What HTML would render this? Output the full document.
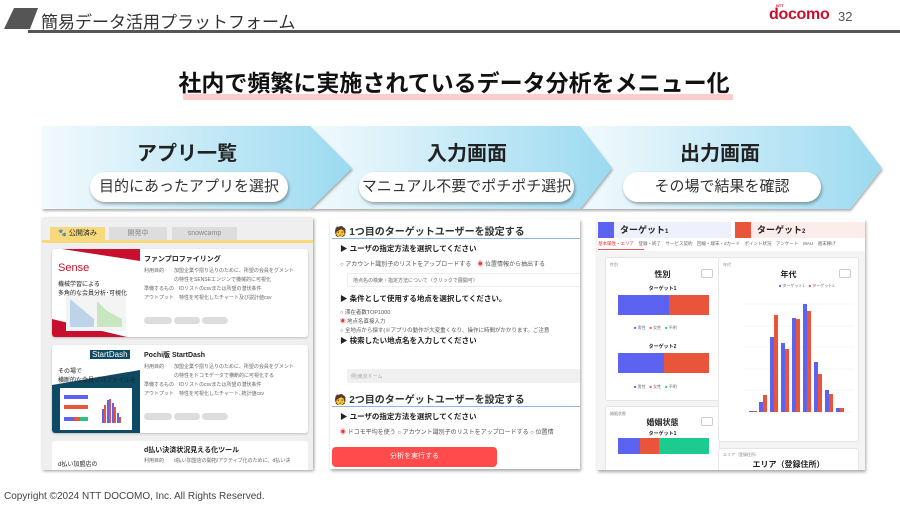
<!DOCTYPE html>
<html><head><meta charset="utf-8"><style>
*{box-sizing:border-box;margin:0;padding:0}
body{width:900px;height:505px;background:#fff;font-family:"Liberation Sans","Noto Sans CJK JP",sans-serif;position:relative;overflow:hidden;color:#222}
.a{position:absolute}
.t{white-space:nowrap}
.pill{position:absolute;height:30px;background:#fff;border-radius:15px;box-shadow:1px 2px 3px rgba(0,0,0,.35);font-size:15px;text-align:center;line-height:30px;color:#333}
.h{position:absolute;font-size:20px;font-weight:bold;color:#222;text-align:center}
.sm{font-size:5px;color:#666}
</style></head><body>
<!-- header -->
<svg class="a" style="left:0;top:0" width="900" height="36">
<polygon points="14,8 38,8 30,29 4,29" fill="#555"/>
<rect x="28" y="30" width="872" height="3" fill="#555"/>
</svg>
<div class="a t" style="left:41px;top:8px;font-size:17px;color:#333">簡易データ活用プラットフォーム</div>
<div class="a t" style="left:769px;top:6px;font-size:16px;font-weight:bold;color:#c8102e;letter-spacing:-0.3px">docomo</div>
<div class="a t" style="left:776px;top:3px;font-size:4px;color:#c8102e;font-weight:bold">NTT</div>
<div class="a t" style="left:838px;top:9px;font-size:13px;color:#555">32</div>

<!-- title -->
<div class="a" style="left:183px;top:94px;width:550px;height:6px;background:#fcc"></div>
<div class="a t" style="left:0;width:908px;text-align:center;top:64px;font-size:23px;font-weight:bold;color:#111">社内で頻繁に実施されているデータ分析をメニュー化</div>

<!-- chevrons -->
<svg class="a" style="left:0;top:0" width="900" height="215">
<defs><linearGradient id="g" x1="0" x2="1"><stop offset="0" stop-color="#f2fafd"/><stop offset="1" stop-color="#9bdaf0"/></linearGradient>
<filter id="s"><feDropShadow dx="1" dy="2" stdDeviation="1" flood-opacity=".3"/></filter></defs>
<polygon filter="url(#s)" points="580,126 850,126 882,168 850,209 580,209 612,168" fill="url(#g)"/>
<polygon filter="url(#s)" points="310,126 580,126 612,168 580,209 310,209 342,168" fill="url(#g)"/>
<polygon filter="url(#s)" points="42,126 310,126 352,168 310,209 42,209" fill="url(#g)"/>
</svg>
<div class="h t" style="left:87px;width:200px;top:137px">アプリ一覧</div>
<div class="h t" style="left:362px;width:210px;top:137px">入力画面</div>
<div class="h t" style="left:620px;width:200px;top:137px">出力画面</div>
<div class="pill t" style="left:90px;top:172px;width:198px">目的にあったアプリを選択</div>
<div class="pill t" style="left:359px;top:172px;width:215px">マニュアル不要でポチポチ選択</div>
<div class="pill t" style="left:623px;top:172px;width:198px">その場で結果を確認</div>

<!-- left panel -->
<div class="a" style="left:42px;top:218px;width:271px;height:252px;background:#efefef;box-shadow:1px 1px 3px rgba(0,0,0,.4);overflow:hidden">
 <div class="a" style="left:0;top:22px;width:271px;height:3px;background:#f7d87a"></div>
 <div class="a t" style="left:8px;top:9px;width:55px;height:14px;background:#f7d87a;font-size:7px;line-height:14px;text-align:center">🐾 公開済み</div>
 <div class="a t" style="left:67px;top:9px;width:58px;height:13px;background:#ddd;font-size:7px;line-height:13px;text-align:center;color:#888">開発中</div>
 <div class="a t" style="left:130px;top:9px;width:65px;height:13px;background:#ddd;font-size:7px;line-height:13px;text-align:center;color:#888">snowcamp</div>
 <div class="a" style="left:10px;top:31px;width:256px;height:88px;background:#fff;border-radius:3px;box-shadow:0 1px 2px rgba(0,0,0,.2);overflow:hidden">
  <svg class="a" style="left:0;top:0" width="88" height="88"><polygon points="10,0 88,0 88,12" fill="#c8102e"/><polygon points="0,70 0,88 75,88" fill="#c8102e"/><rect x="14" y="46" width="60" height="36" fill="#f4f4f4"/><polygon points="18,50 18,78 42,78 42,70 30,60" fill="#bcd3ea"/><polygon points="45,52 45,78 70,78 70,70 55,62" fill="#c8e6c0"/></svg>
  <div class="a t" style="left:6px;top:13px;font-size:11px;color:#c8102e">Sense</div>
  <div class="a t" style="left:6px;top:30px;font-size:6px">機械学習による<br>多角的な会員分析･可視化</div>
  <div class="a t" style="left:92px;top:5px;font-size:7px;font-weight:bold">ファンプロファイリング</div>
  <div class="a t sm" style="left:92px;top:18px;line-height:9px">利用目的　　加盟企業や摺り込りのために、所望の会員をグメント<br>　　　　　　の特性をSENSEエンジンで機械的に可視化<br>準備するもの　IDリストのcsvまたは所望の潜伏条件<br>アウトプット　特性を可視化したチャート及び説計値csv</div>
  <div class="a" style="left:92px;top:68px;width:28px;height:7px;background:#ddd;border-radius:4px"></div>
  <div class="a" style="left:122px;top:68px;width:26px;height:7px;background:#ddd;border-radius:4px"></div>
  <div class="a" style="left:150px;top:68px;width:26px;height:7px;background:#ddd;border-radius:4px"></div>
 </div>
 <div class="a" style="left:10px;top:127px;width:256px;height:88px;background:#fff;border-radius:3px;box-shadow:0 1px 2px rgba(0,0,0,.2);overflow:hidden">
  <svg class="a" style="left:0;top:0" width="88" height="88"><polygon points="0,40 88,25 88,88 0,88" fill="#0f4a64"/><rect x="8" y="43" width="72" height="42" fill="#fff"/><rect x="12" y="50" width="24" height="4" fill="#5b63f0"/><rect x="12" y="60" width="24" height="4" fill="#e8553a"/><rect x="12" y="72" width="10" height="4" fill="#5b63f0"/><rect x="22" y="72" width="6" height="4" fill="#e8553a"/><rect x="28" y="72" width="8" height="4" fill="#2ac48a"/><g fill="#5b63f0"><rect x="50" y="64" width="2" height="14"/><rect x="55" y="55" width="2" height="23"/><rect x="60" y="58" width="2" height="20"/><rect x="65" y="68" width="2" height="10"/></g><g fill="#e8553a"><rect x="52" y="60" width="2" height="18"/><rect x="57" y="54" width="2" height="24"/><rect x="62" y="62" width="2" height="16"/><rect x="67" y="72" width="2" height="6"/></g></svg>
  <div class="a t" style="left:38px;top:5px;font-size:8px;background:#0f4a64;color:#fff;padding:0 2px">StartDash</div>
  <div class="a t" style="left:6px;top:23px;font-size:6px;line-height:9px">その場で<br>横断的な会員プロファイルを</div>
  <div class="a t" style="left:92px;top:5px;font-size:7px;font-weight:bold">Pochi版 StartDash</div>
  <div class="a t sm" style="left:92px;top:18px;line-height:9px">利用目的　　加盟企業や摺り込りのために、所望の会員をグメント<br>　　　　　　の特性をドコモデータで横断的に可視化する<br>準備するもの　IDリストのcsvまたは所望の潜伏条件<br>アウトプット　特性を可視化したチャート､統計値csv</div>
  <div class="a" style="left:92px;top:68px;width:28px;height:7px;background:#ddd;border-radius:4px"></div>
  <div class="a" style="left:122px;top:68px;width:26px;height:7px;background:#ddd;border-radius:4px"></div>
  <div class="a" style="left:150px;top:68px;width:26px;height:7px;background:#ddd;border-radius:4px"></div>
 </div>
 <div class="a" style="left:10px;top:223px;width:256px;height:40px;background:#fff;border-radius:3px">
  <div class="a t" style="left:6px;top:18px;font-size:6px">d払い加盟店の</div>
  <div class="a t" style="left:92px;top:4px;font-size:7px;font-weight:bold">d払い決済状況見える化ツール</div>
  <div class="a t sm" style="left:92px;top:16px">利用目的　　d払い加盟店の開拓/アクティブ化のために、d払い決</div>
 </div>
</div>

<!-- middle panel -->
<div class="a" style="left:330px;top:219px;width:250px;height:250px;background:#fff;box-shadow:1px 2px 3px rgba(0,0,0,.35);overflow:hidden">
 <div class="a t" style="left:4px;top:4px;font-size:10px;font-weight:bold;color:#333">🧑 1つ目のターゲットユーザーを設定する</div>
 <div class="a" style="left:2px;top:19px;width:248px;height:1px;background:#8ab6e8"></div>
 <div class="a t" style="left:10px;top:24px;font-size:7.5px;font-weight:bold">▶ ユーザの指定方法を選択してください</div>
 <div class="a t" style="left:10px;top:40px;font-size:6px;color:#555">○ アカウント識別子のリストをアップロードする　<span style="color:#e33">◉</span> 位置情報から抽出する</div>
 <div class="a" style="left:17px;top:54px;width:240px;height:14px;border:1px solid #eee;border-radius:2px"></div>
 <div class="a t" style="left:23px;top:58px;font-size:5px;color:#666">地点名の検索・指定方法について（クリックで展開可）</div>
 <div class="a t" style="left:10px;top:74px;font-size:7.5px;font-weight:bold">▶ 条件として使用する地点を選択してください。</div>
 <div class="a t" style="left:10px;top:90px;font-size:5.5px;color:#555;line-height:9px">○ 滞在者数TOP1000<br><span style="color:#e33">◉</span> 地点名直接入力<br>○ 全地点から探す(※アプリの動作が大変重くなり、操作に時間がかかります。ご注意</div>
 <div class="a t" style="left:10px;top:116px;font-size:7.5px;font-weight:bold">▶ 検索したい地点名を入力してください</div>
 <div class="a" style="left:17px;top:150px;width:240px;height:14px;background:#f0f0f0"></div>
 <div class="a t" style="left:21px;top:154px;font-size:5px;color:#aaa">例)東京ドーム</div>
 <div class="a t" style="left:4px;top:172px;font-size:10px;font-weight:bold;color:#333">🧑 2つ目のターゲットユーザーを設定する</div>
 <div class="a" style="left:2px;top:187px;width:248px;height:1px;background:#8ab6e8"></div>
 <div class="a t" style="left:10px;top:192px;font-size:7.5px;font-weight:bold">▶ ユーザの指定方法を選択してください</div>
 <div class="a t" style="left:10px;top:208px;font-size:6px;color:#555"><span style="color:#e33">◉</span> ドコモ平均を使う ○ アカウント識別子のリストをアップロードする ○ 位置情</div>
 <div class="a t" style="left:2px;top:228px;width:165px;height:20px;background:#ff4b4b;border-radius:4px;color:#fff;font-size:7px;line-height:20px;text-align:center">分析を実行する</div>
</div>

<!-- right panel -->
<div class="a" style="left:597px;top:219px;width:268px;height:251px;background:#f4f4f4;box-shadow:1px 2px 3px rgba(0,0,0,.35);overflow:hidden">
 <div class="a" style="left:0;top:0;width:268px;height:32px;background:#fff"></div>
 <div class="a" style="left:1px;top:3px;width:16px;height:16px;background:#5b63f0"></div>
 <div class="a t" style="left:17px;top:3px;width:117px;height:16px;background:#eef0fb;font-size:9px;font-weight:bold;line-height:16px;padding-left:6px">ターゲット<span style="font-size:6px">1</span></div>
 <div class="a" style="left:138px;top:3px;width:16px;height:16px;background:#e8553a"></div>
 <div class="a t" style="left:154px;top:3px;width:114px;height:16px;background:#fcecea;font-size:9px;font-weight:bold;line-height:16px;padding-left:6px">ターゲット<span style="font-size:6px">2</span></div>
 <div class="a t" style="left:1px;top:22px;font-size:4.5px;color:#666"><span style="color:#e33">基本属性・エリア</span>　登録・終了　サービス契約　回線・端末・dカード　ポイント状況　アンケート　WAU　週末稼げ</div>
 <div class="a" style="left:1px;top:30px;width:46px;height:1px;background:#e55"></div>
 <div class="a" style="left:8px;top:38px;width:115px;height:144px;background:#fff;border:1px solid #e6e6e6;border-radius:3px">
  <div class="a t" style="left:4px;top:4px;font-size:4px;color:#888">性別</div>
  <div class="a t" style="left:0;width:113px;top:11px;text-align:center;font-size:8px;font-weight:bold">性別</div>
  <div class="a" style="left:95px;top:11px;width:12px;height:9px;border:1px solid #ccc;border-radius:2px"></div>
  <div class="a t" style="left:0;width:113px;top:27px;text-align:center;font-size:5px;font-weight:bold">ターゲット1</div>
  <div class="a" style="left:12px;top:37px;width:51px;height:20px;background:#5b63f0"></div><div class="a" style="left:63px;top:37px;width:40px;height:20px;background:#e8553a"></div>
  <div class="a t" style="left:28px;top:67px;font-size:4px;color:#666"><span style="color:#5b63f0">■</span> 男性　<span style="color:#e8553a">■</span> 女性　<span style="color:#2ac48a">■</span> 不明</div>
  <div class="a t" style="left:0;width:113px;top:85px;text-align:center;font-size:5px;font-weight:bold">ターゲット2</div>
  <div class="a" style="left:12px;top:95px;width:46px;height:20px;background:#5b63f0"></div><div class="a" style="left:58px;top:95px;width:45px;height:20px;background:#e8553a"></div>
  <div class="a t" style="left:28px;top:126px;font-size:4px;color:#666"><span style="color:#5b63f0">■</span> 男性　<span style="color:#e8553a">■</span> 女性　<span style="color:#2ac48a">■</span> 不明</div>
 </div>
 <div class="a" style="left:8px;top:187px;width:115px;height:70px;background:#fff;border:1px solid #e6e6e6;border-radius:3px">
  <div class="a t" style="left:4px;top:4px;font-size:4px;color:#888">婚姻状態</div>
  <div class="a t" style="left:0;width:113px;top:10px;text-align:center;font-size:8px;font-weight:bold">婚姻状態</div>
  <div class="a" style="left:95px;top:10px;width:12px;height:9px;border:1px solid #ccc;border-radius:2px"></div>
  <div class="a t" style="left:0;width:113px;top:23px;text-align:center;font-size:5px;font-weight:bold">ターゲット1</div>
  <div class="a" style="left:12px;top:31px;width:22px;height:16px;background:#5b63f0"></div><div class="a" style="left:34px;top:31px;width:19px;height:16px;background:#e8553a"></div><div class="a" style="left:53px;top:31px;width:50px;height:16px;background:#1ecb8e"></div>
 </div>
 <div class="a" style="left:121px;top:38px;width:141px;height:185px;background:#fff;border:1px solid #e6e6e6;border-radius:3px">
  <div class="a t" style="left:4px;top:4px;font-size:4px;color:#888">年代</div>
  <div class="a t" style="left:0;width:139px;top:11px;text-align:center;font-size:8px;font-weight:bold">年代</div>
  <div class="a" style="left:120px;top:11px;width:12px;height:9px;border:1px solid #ccc;border-radius:2px"></div>
  <div class="a t" style="left:60px;top:25px;font-size:4px;color:#666"><span style="color:#5b63f0">■</span> ターゲット1　<span style="color:#e8553a">■</span> ターゲット2</div>
  <svg class="a" style="left:0;top:0" width="139" height="185">
   <g stroke="#eee" stroke-width=".5"><line x1="25" y1="46" x2="135" y2="46"/><line x1="25" y1="68" x2="135" y2="68"/><line x1="25" y1="89" x2="135" y2="89"/><line x1="25" y1="111" x2="135" y2="111"/><line x1="25" y1="132" x2="135" y2="132"/><line x1="25" y1="154" x2="135" y2="154"/></g>
   <g fill="#5b63f0"><rect x="30" y="153" width="4" height="1"/><rect x="40" y="144" width="4" height="10"/><rect x="51" y="79" width="4" height="75"/><rect x="62" y="85" width="4" height="69"/><rect x="73" y="60" width="4" height="94"/><rect x="84" y="46" width="4" height="108"/><rect x="95" y="104" width="4" height="50"/><rect x="106" y="132" width="4" height="22"/><rect x="117" y="150" width="4" height="4"/></g>
   <g fill="#e8553a"><rect x="34" y="153" width="4" height="1"/><rect x="44" y="137" width="4" height="17"/><rect x="55" y="57" width="4" height="97"/><rect x="66" y="91" width="4" height="63"/><rect x="77" y="61" width="4" height="93"/><rect x="88" y="53" width="4" height="101"/><rect x="99" y="116" width="4" height="38"/><rect x="110" y="136" width="4" height="18"/><rect x="121" y="150" width="4" height="4"/></g>
  </svg>
 </div>
 <div class="a" style="left:121px;top:229px;width:141px;height:30px;background:#fff;border:1px solid #e6e6e6;border-radius:3px">
  <div class="a t" style="left:4px;top:3px;font-size:4px;color:#888">エリア（登録住所）</div>
  <div class="a t" style="left:0;width:139px;top:10px;text-align:center;font-size:8px;font-weight:bold">エリア（登録住所）</div>
 </div>
</div>

<div class="a t" style="left:4px;top:491px;font-size:10px;color:#444">Copyright ©2024 NTT DOCOMO, Inc. All Rights Reserved.</div>
</body></html>
